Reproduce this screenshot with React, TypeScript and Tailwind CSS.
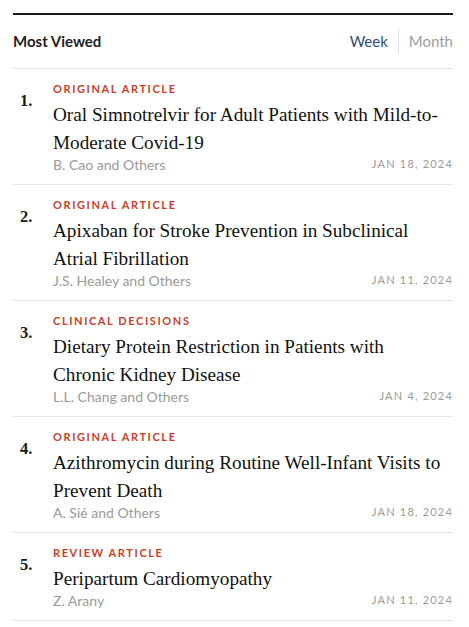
import React from "react";

const items = [
  {
    n: "1.",
    cat: "ORIGINAL ARTICLE",
    title: "Oral Simnotrelvir for Adult Patients with Mild-to-Moderate Covid-19",
    author: "B. Cao and Others",
    date: "JAN 18, 2024",
  },
  {
    n: "2.",
    cat: "ORIGINAL ARTICLE",
    title: "Apixaban for Stroke Prevention in Subclinical Atrial Fibrillation",
    author: "J.S. Healey and Others",
    date: "JAN 11, 2024",
  },
  {
    n: "3.",
    cat: "CLINICAL DECISIONS",
    title: "Dietary Protein Restriction in Patients with Chronic Kidney Disease",
    author: "L.L. Chang and Others",
    date: "JAN 4, 2024",
  },
  {
    n: "4.",
    cat: "ORIGINAL ARTICLE",
    title: "Azithromycin during Routine Well-Infant Visits to Prevent Death",
    author: "A. Sié and Others",
    date: "JAN 18, 2024",
  },
  {
    n: "5.",
    cat: "REVIEW ARTICLE",
    title: "Peripartum Cardiomyopathy",
    author: "Z. Arany",
    date: "JAN 11, 2024",
  },
];

export default function App() {
  return (
    <div className="w-[469px] h-[627px] bg-white overflow-hidden pl-[13px] pt-[13px] pr-[16px]">
      <div className="border-t-2 border-[#1a1a1a]">
        <div className="flex items-center justify-between h-[54px] border-b border-[#e6e6e6]">
          <div className="text-[15px] font-bold text-[#222] font-['Lato',sans-serif]">Most Viewed</div>
          <div className="flex items-center font-['Lato',sans-serif] text-[15px]">
            <span className="text-[#2f4d7e] pr-[10px]">Week</span>
            <span className="w-px h-[25px] bg-[#e3e3e3]" />
            <span className="text-[#a0a0a0] pl-[10px]">Month</span>
          </div>
        </div>
        {items.map((it) => (
          <div key={it.n} className="flex border-b border-[#e6e6e6] pt-[12px] pb-[12px]">
            <div className="w-[40px] shrink-0 pl-[7px] pt-[10px] font-['Liberation_Serif',serif] font-bold text-[16.5px] leading-[20px] text-[#1a1a1a]">
              {it.n}
            </div>
            <div className="flex-1 min-w-0">
              <div className="font-['Lato',sans-serif] font-bold text-[11px] leading-[16px] tracking-[1.6px] text-[#c8402a]">
                {it.cat}
              </div>
              <div className="mt-[4px] font-['Liberation_Serif',serif] text-[19.2px] leading-[28px] text-[#111] pr-[6px]">
                {it.title}
              </div>
              <div className="flex items-center justify-between h-[15px]">
                <span className="font-['Lato',sans-serif] text-[14px] text-[#9a9a9a]">{it.author}</span>
                <span className="font-['Lato',sans-serif] text-[11px] tracking-[1.2px] text-[#9a9a9a]">{it.date}</span>
              </div>
            </div>
          </div>
        ))}
      </div>
    </div>
  );
}
